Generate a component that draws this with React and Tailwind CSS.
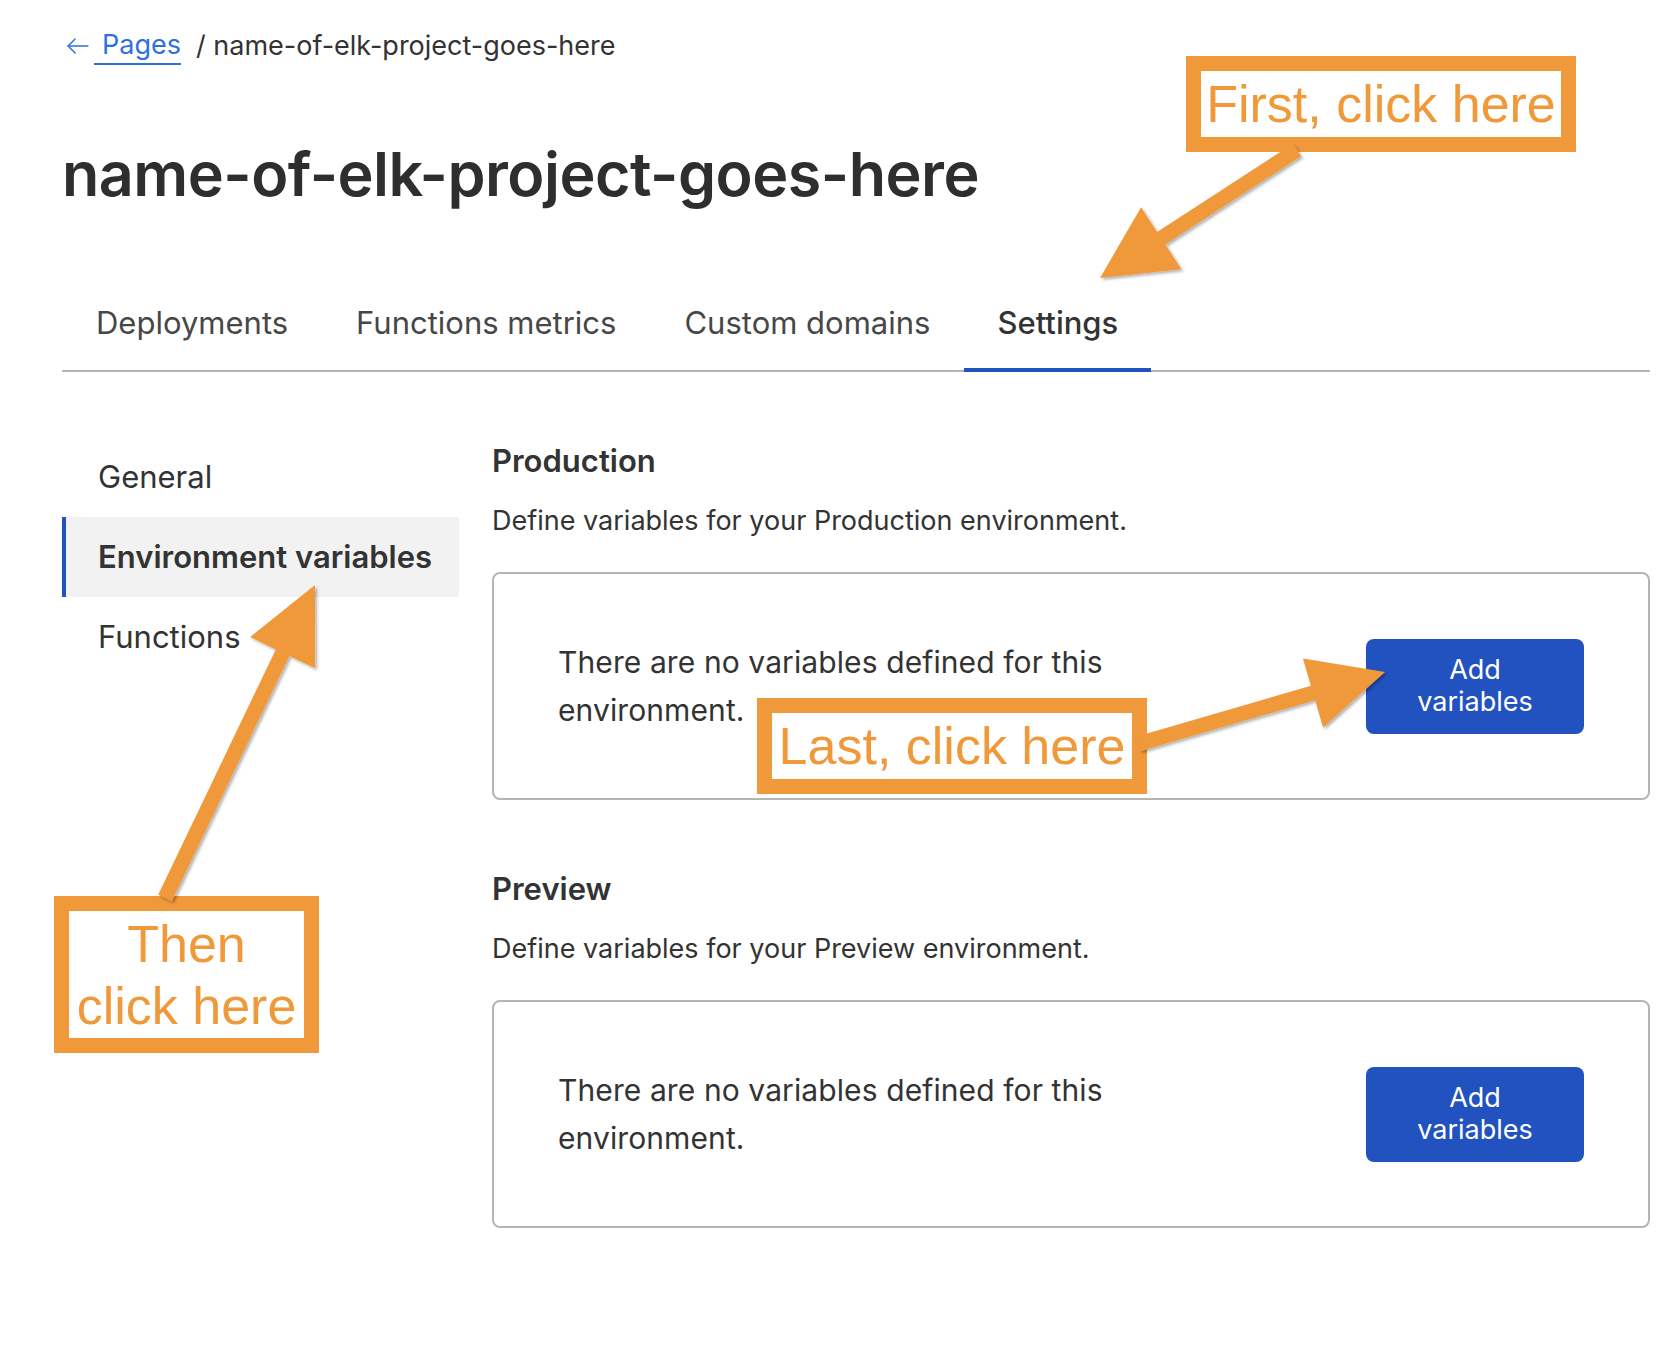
import React from 'react'

const ORANGE = '#f0993a'

// flecha: punto inicial, punta, grosor del cuerpo, largo y medio ancho de la cabeza
function arrowPoints([x1, y1], [x2, y2], w, L, H) {
  const dx = x2 - x1
  const dy = y2 - y1
  const len = Math.hypot(dx, dy)
  const ux = dx / len
  const uy = dy / len
  const nx = -uy
  const ny = ux
  const bx = x2 - ux * L
  const by = y2 - uy * L
  const p = [
    [x1 + (nx * w) / 2, y1 + (ny * w) / 2],
    [bx + (nx * w) / 2, by + (ny * w) / 2],
    [bx + nx * H, by + ny * H],
    [x2, y2],
    [bx - nx * H, by - ny * H],
    [bx - (nx * w) / 2, by - (ny * w) / 2],
    [x1 - (nx * w) / 2, y1 - (ny * w) / 2],
  ]
  return p.map(([a, b]) => `${a.toFixed(1)},${b.toFixed(1)}`).join(' ')
}

function EmptyEnv() {
  return (
    <div className="border-2 border-[#b5b5b5] rounded-[8px] px-[64px] py-[64px] flex items-center justify-between">
      <p className="w-[600px] text-[30px] leading-[48px] tracking-[0.1px] text-[#333]">
        There are no variables defined for this environment.
      </p>
      <button className="w-[218px] h-[95px] rounded-[8px] bg-[#2152bf] text-white text-[27px] leading-[32px] flex flex-col items-center justify-center">
        <span>Add</span>
        <span>variables</span>
      </button>
    </div>
  )
}

export default function App() {
  const tabs = ['Deployments', 'Functions metrics', 'Custom domains', 'Settings']

  return (
    <div className="relative w-[1680px] min-h-[1370px] bg-white pl-[62px] pr-[30px] pt-[28px] text-[#333] font-['Inter','Noto_Sans',sans-serif]">
      {/* Breadcrumb */}
      <div className="flex items-center h-[36px] text-[27px]">
        <svg className="w-[28px] h-[28px] ml-[2px] text-[#2f6fe0]" viewBox="0 0 24 24" fill="none" stroke="currentColor" strokeWidth="1.3" strokeLinecap="round" strokeLinejoin="round">
          <path d="M20.5 12H3.5" />
          <path d="M9.5 6l-6 6 6 6" />
        </svg>
        <a className="ml-[2px] pl-[8px] border-b-2 border-[#2f6fe0] text-[#2f6fe0] leading-[36px]">Pages</a>
        <span className="ml-[15px]">/ name-of-elk-project-goes-here</span>
      </div>

      {/* Titulo */}
      <h1 className="mt-[76px] text-[61px] leading-[68px] font-semibold tracking-[-0.5px] text-[#2e2e2e]">
        name-of-elk-project-goes-here
      </h1>

      {/* Tabs */}
      <nav className="mt-[95px] flex border-b-2 border-[#b5b5b5]">
        {tabs.map(t => (
          <div
            key={t}
            className={
              t === 'Settings'
                ? 'px-[33px] pb-[25px] text-[31px] leading-[40px] font-medium text-[#333] border-b-4 border-[#2152bf] -mb-[2px]'
                : 'px-[34px] pb-[27px] text-[31px] leading-[40px] text-[#474747]'
            }
          >
            {t}
          </div>
        ))}
      </nav>

      <div className="flex mt-[65px]">
        {/* Menu lateral */}
        <aside className="w-[397px] shrink-0 text-[31px]">
          <div className="h-[80px] flex items-center pl-[36px]">General</div>
          <div className="h-[80px] flex items-center pl-[32px] border-l-4 border-[#2152bf] bg-[#f2f2f2] font-semibold">
            Environment variables
          </div>
          <div className="h-[80px] flex items-center pl-[36px]">Functions</div>
        </aside>

        {/* Contenido */}
        <main className="flex-1 ml-[33px] pt-[4px]">
          <h2 className="text-[31px] leading-[40px] font-semibold">Production</h2>
          <p className="mt-[22px] text-[27px] leading-[36px]">Define variables for your Production environment.</p>
          <div className="mt-[33px]">
            <EmptyEnv />
          </div>

          <h2 className="mt-[69px] text-[31px] leading-[40px] font-semibold">Preview</h2>
          <p className="mt-[22px] text-[27px] leading-[36px]">Define variables for your Preview environment.</p>
          <div className="mt-[33px]">
            <EmptyEnv />
          </div>
        </main>
      </div>

      {/* Anotaciones */}
      <div className="absolute left-[1186px] top-[56px] w-[390px] h-[96px] border-[15px] border-[#f0993a] bg-white flex items-center justify-center text-[52px] leading-[60px] text-[#f0993a] font-['Liberation_Sans',Arial,sans-serif]">
        First, click here
      </div>
      <div className="absolute left-[757px] top-[698px] w-[390px] h-[96px] border-[15px] border-[#f0993a] bg-white flex items-center justify-center text-[52px] leading-[60px] text-[#f0993a] font-['Liberation_Sans',Arial,sans-serif]">
        Last, click here
      </div>
      <div className="absolute left-[54px] top-[896px] w-[265px] h-[157px] border-[15px] border-[#f0993a] bg-white flex flex-col items-center justify-center text-[52px] leading-[62px] text-[#f0993a] font-['Liberation_Sans',Arial,sans-serif]">
        <span>Then</span>
        <span>click here</span>
      </div>

      <svg className="absolute left-0 top-0 pointer-events-none" width="1680" height="1370" viewBox="0 0 1680 1370">
        <defs>
          <filter id="sh" x="-20%" y="-20%" width="140%" height="140%">
            <feDropShadow dx="2" dy="2" stdDeviation="1.5" floodColor="#000" floodOpacity="0.3" />
          </filter>
        </defs>
        <g fill={ORANGE} filter="url(#sh)">
          <polygon points={arrowPoints([1297, 150], [1100, 278], 15, 73, 37)} />
          <polygon points={arrowPoints([165, 898], [315, 585], 15, 75, 36)} />
          <polygon points={arrowPoints([1138, 744], [1385, 672], 15, 75, 36)} />
        </g>
      </svg>
    </div>
  )
}
